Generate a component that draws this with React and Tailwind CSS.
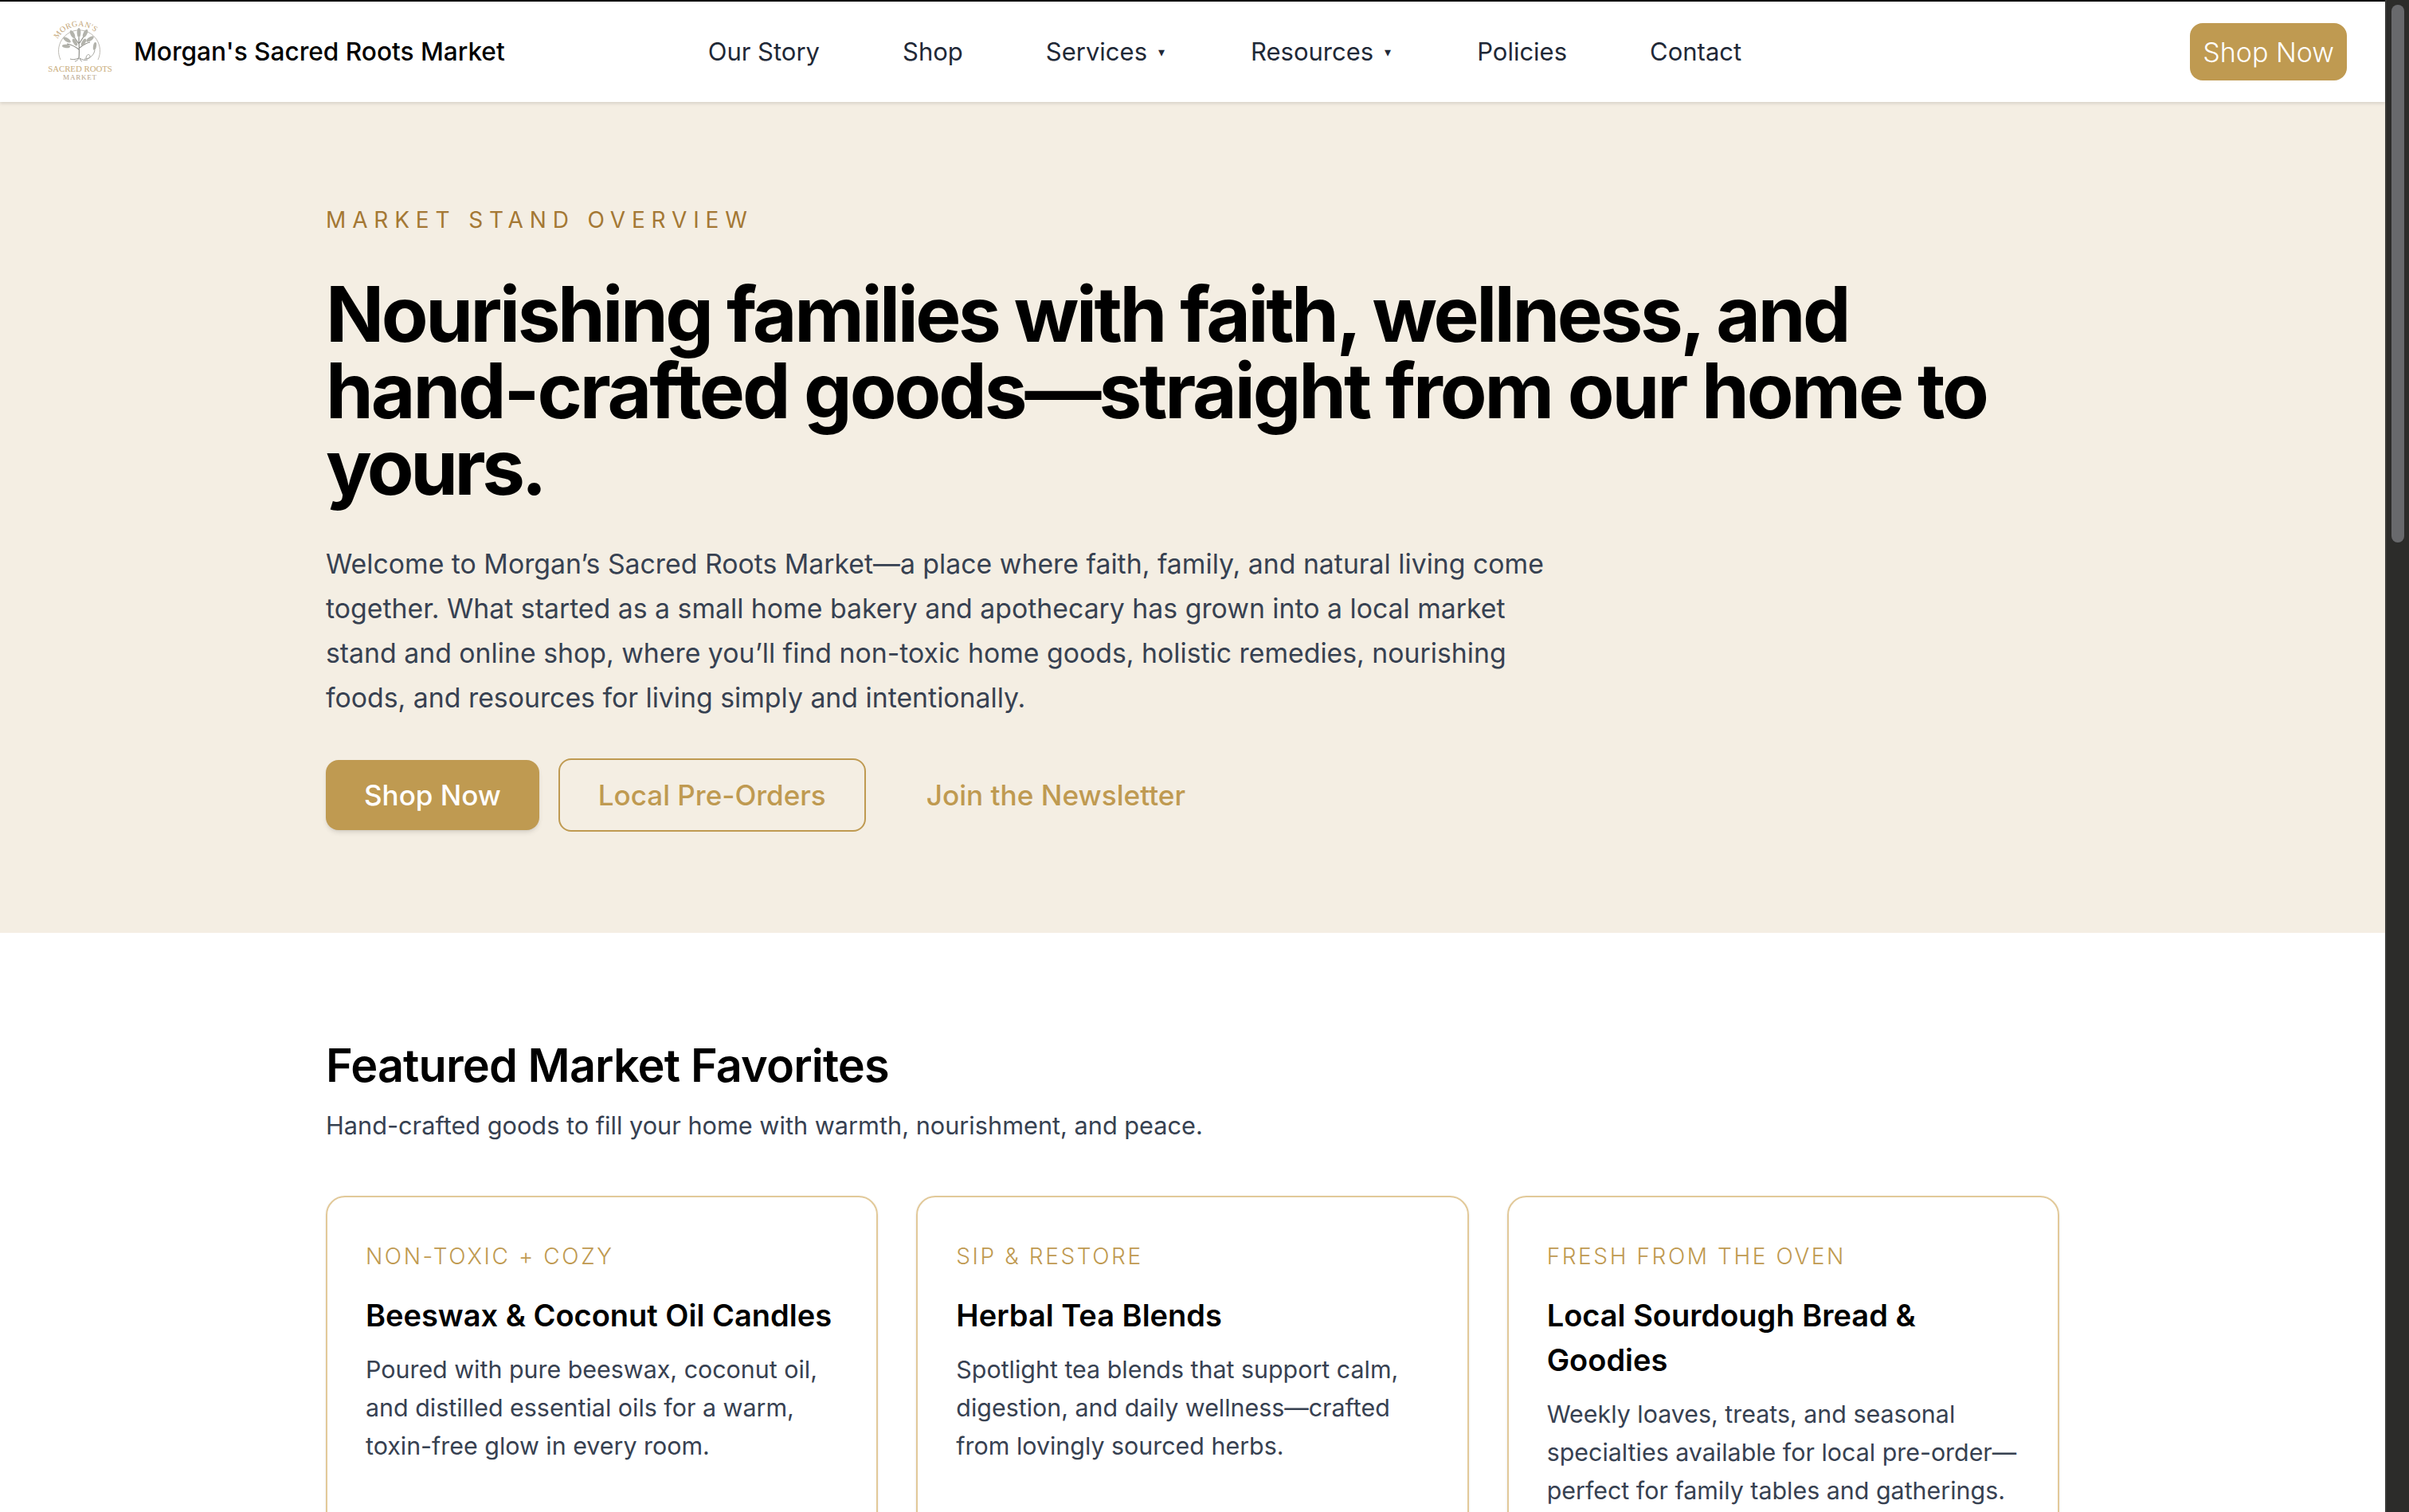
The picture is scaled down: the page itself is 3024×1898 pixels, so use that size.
const GOLD = 'text-[#bf9a51]';

const NAV_LINKS = [
  { label: 'Our Story' },
  { label: 'Shop' },
  { label: 'Services', caret: true },
  { label: 'Resources', caret: true },
  { label: 'Policies' },
  { label: 'Contact' },
];

const CARDS = [
  {
    tag: 'NON-TOXIC + COZY',
    title: 'Beeswax & Coconut Oil Candles',
    body: 'Poured with pure beeswax, coconut oil, and distilled essential oils for a warm, toxin-free glow in every room.',
  },
  {
    tag: 'SIP & RESTORE',
    title: 'Herbal Tea Blends',
    body: 'Spotlight tea blends that support calm, digestion, and daily wellness—crafted from lovingly sourced herbs.',
  },
  {
    tag: 'FRESH FROM THE OVEN',
    title: 'Local Sourdough Bread & Goodies',
    body: 'Weekly loaves, treats, and seasonal specialties available for local pre-order—perfect for family tables and gatherings.',
  },
];

function Logo() {
  return (
    <svg width="90" height="84" viewBox="0 0 90 84" className="shrink-0">
      <defs>
        <path id="logo-arc" d="M12.5 41 A31 31 0 0 1 74.5 41" fill="none" />
      </defs>
      <text fill="#c4a678" fontSize="10" fontFamily="'Liberation Serif', serif" letterSpacing="0.4">
        <textPath href="#logo-arc" startOffset="16%">MORGAN'S</textPath>
      </text>
      <path d="M20 52 A26 26 0 1 1 67 52" fill="none" stroke="#b5b2aa" strokeWidth="0.9" />
      <g transform="translate(0 -3)">
        <path d="M43 53 C44 44 43 38 43 27 M43 42 C38 38 33 36 28 35 M44 40 C49 36 52 34 57 33 M43 35 C40 31 38 28 36 25 M44 34 C46 30 49 27 50 24" fill="none" stroke="#8f8f89" strokeWidth="1.2" />
        <path d="M43 53 C38 55 35 55 32 54 M44 53 C47 55 50 56 54 55 M43 53 C42 55 40 57 38 57 M44 53 C45 56 46 57 47 57" fill="none" stroke="#8f8f89" strokeWidth="0.9" />
        <g fill="#b3b3ac">
          <ellipse cx="43" cy="21" rx="2.4" ry="6" />
          <ellipse cx="35" cy="23" rx="2.4" ry="5.5" transform="rotate(-28 35 23)" />
          <ellipse cx="51" cy="22" rx="2.4" ry="5.5" transform="rotate(26 51 22)" />
          <ellipse cx="28" cy="30" rx="2.3" ry="5.5" transform="rotate(-58 28 30)" />
          <ellipse cx="57" cy="29" rx="2.3" ry="5.5" transform="rotate(56 57 29)" />
          <ellipse cx="27" cy="38" rx="2.2" ry="5" transform="rotate(-85 27 38)" />
          <ellipse cx="38" cy="33" rx="2.2" ry="5" transform="rotate(-30 38 33)" />
          <ellipse cx="49" cy="33" rx="2.2" ry="5" transform="rotate(30 49 33)" />
          <ellipse cx="63" cy="38" rx="2" ry="5" transform="rotate(10 63 38)" />
        </g>
        <path d="M50 54 C58 54 62 48 63 43 M52 53 C52 48 57 47 57 51 C57 54 52 54 52 53" fill="none" stroke="#a5a59e" strokeWidth="1" />
      </g>
      <text x="44.5" y="67" textAnchor="middle" fill="#c9ad7c" fontSize="10.8" fontFamily="'Liberation Serif', serif">SACRED ROOTS</text>
      <text x="44.5" y="77" textAnchor="middle" fill="#b6a58a" fontSize="9" letterSpacing="0.8" fontFamily="'Liberation Serif', serif">MARKET</text>
    </svg>
  );
}

function Scrollbar() {
  return (
    <div className="w-[30px] shrink-0 border-l-2 border-[#3a3a38] bg-[#2c2c2a] pl-[6px] pr-[6px] pt-[6px]">
      <div className="h-[675px] rounded-full bg-[#68696c]" />
    </div>
  );
}

function Card({ card }) {
  return (
    <div className="h-[600px] rounded-[24px] border-2 border-[#e2c999] px-[48px] pt-[54px] shadow-sm">
      <p className={`text-[28px] leading-[40px] tracking-[2.6px] font-[350] ${GOLD}`}>{card.tag}</p>
      <h3 className="mt-[26px] text-[38px] leading-[56px] font-semibold text-black">{card.title}</h3>
      <p className="mt-[16px] text-[30.4px] leading-[48px] text-[#374151]">{card.body}</p>
    </div>
  );
}

export default function App() {
  return (
    <div className="flex h-[1898px] w-[3024px] overflow-hidden bg-white font-['Inter',sans-serif]">
      <div className="w-[2994px] shrink-0">
        {/* Top nav */}
        <header className="relative z-10 flex h-[128px] items-center border-t-2 border-black bg-white pl-[56px] pr-[48px] shadow-[0_2px_4px_rgba(0,0,0,0.12)]">
          <Logo />
          <span className="ml-[22px] text-[31.6px] font-medium text-black">Morgan's Sacred Roots Market</span>
          <nav className="ml-[255px] flex items-center gap-[104px]">
            {NAV_LINKS.map(link => (
              <a key={link.label} className="flex items-center gap-[14px] text-[31px] text-[#1f2937]">
                {link.label}
                {link.caret && <span className="pr-[4px] text-[16px] leading-none text-[#1f2937]">▾</span>}
              </a>
            ))}
          </nav>
          <a className="ml-auto flex h-[72px] items-center rounded-[16px] bg-[#bf9a51] px-[16px] text-[34px] font-light text-white">
            Shop Now
          </a>
        </header>

        {/* Hero */}
        <section className="h-[1043px] bg-[#f4eee3]">
          <div className="mx-auto max-w-[2176px] pt-[130px]">
            <p className="text-[28px] leading-[36px] tracking-[7.85px] text-[#a47834]">MARKET STAND OVERVIEW</p>
            <h1 className="mt-[52px] text-[96px] leading-[96px] font-bold tracking-[-3.4px] text-black">
              Nourishing families with faith, wellness, and{' '}
              <span className="tracking-[-3.05px]">hand-crafted goods—straight from our home to</span>{' '}
              <span className="tracking-[-4.4px]">yours.</span>
            </h1>
            <p className="mt-[46px] max-w-[1560px] text-[33.8px] leading-[56px] text-[#374151]">
              Welcome to Morgan’s Sacred Roots Market—a place where faith, family, and natural living come together. What started as a small home bakery and apothecary has grown into a local market stand and online shop, where you’ll find non-toxic home goods, holistic remedies, nourishing foods, and resources for living simply and intentionally.
            </p>
            <div className="mt-[48px] flex items-center">
              <a className="flex h-[88px] items-center rounded-[16px] bg-[#bf9a51] px-[48px] text-[35px] font-medium text-white shadow-md">
                Shop Now
              </a>
              <a className={`ml-[24px] flex h-[92px] items-center rounded-[16px] border-2 border-[#bf9a51] px-[48px] text-[35px] font-medium ${GOLD}`}>
                Local Pre-Orders
              </a>
              <a className={`ml-[76px] text-[35.2px] font-medium ${GOLD}`}>Join the Newsletter</a>
            </div>
          </div>
        </section>

        {/* Featured */}
        <section className="mx-auto max-w-[2176px] pt-[130px]">
          <h2 className="text-[57.6px] leading-[72px] font-semibold tracking-[-0.015em] text-black">Featured Market Favorites</h2>
          <p className="mt-[16px] text-[30.7px] leading-[48px] text-[#374151]">
            Hand-crafted goods to fill your home with warmth, nourishment, and peace.
          </p>
          <div className="mt-[64px] grid grid-cols-3 gap-[48px]">
            {CARDS.map(card => (
              <Card key={card.tag} card={card} />
            ))}
          </div>
        </section>
      </div>
      <Scrollbar />
    </div>
  );
}
